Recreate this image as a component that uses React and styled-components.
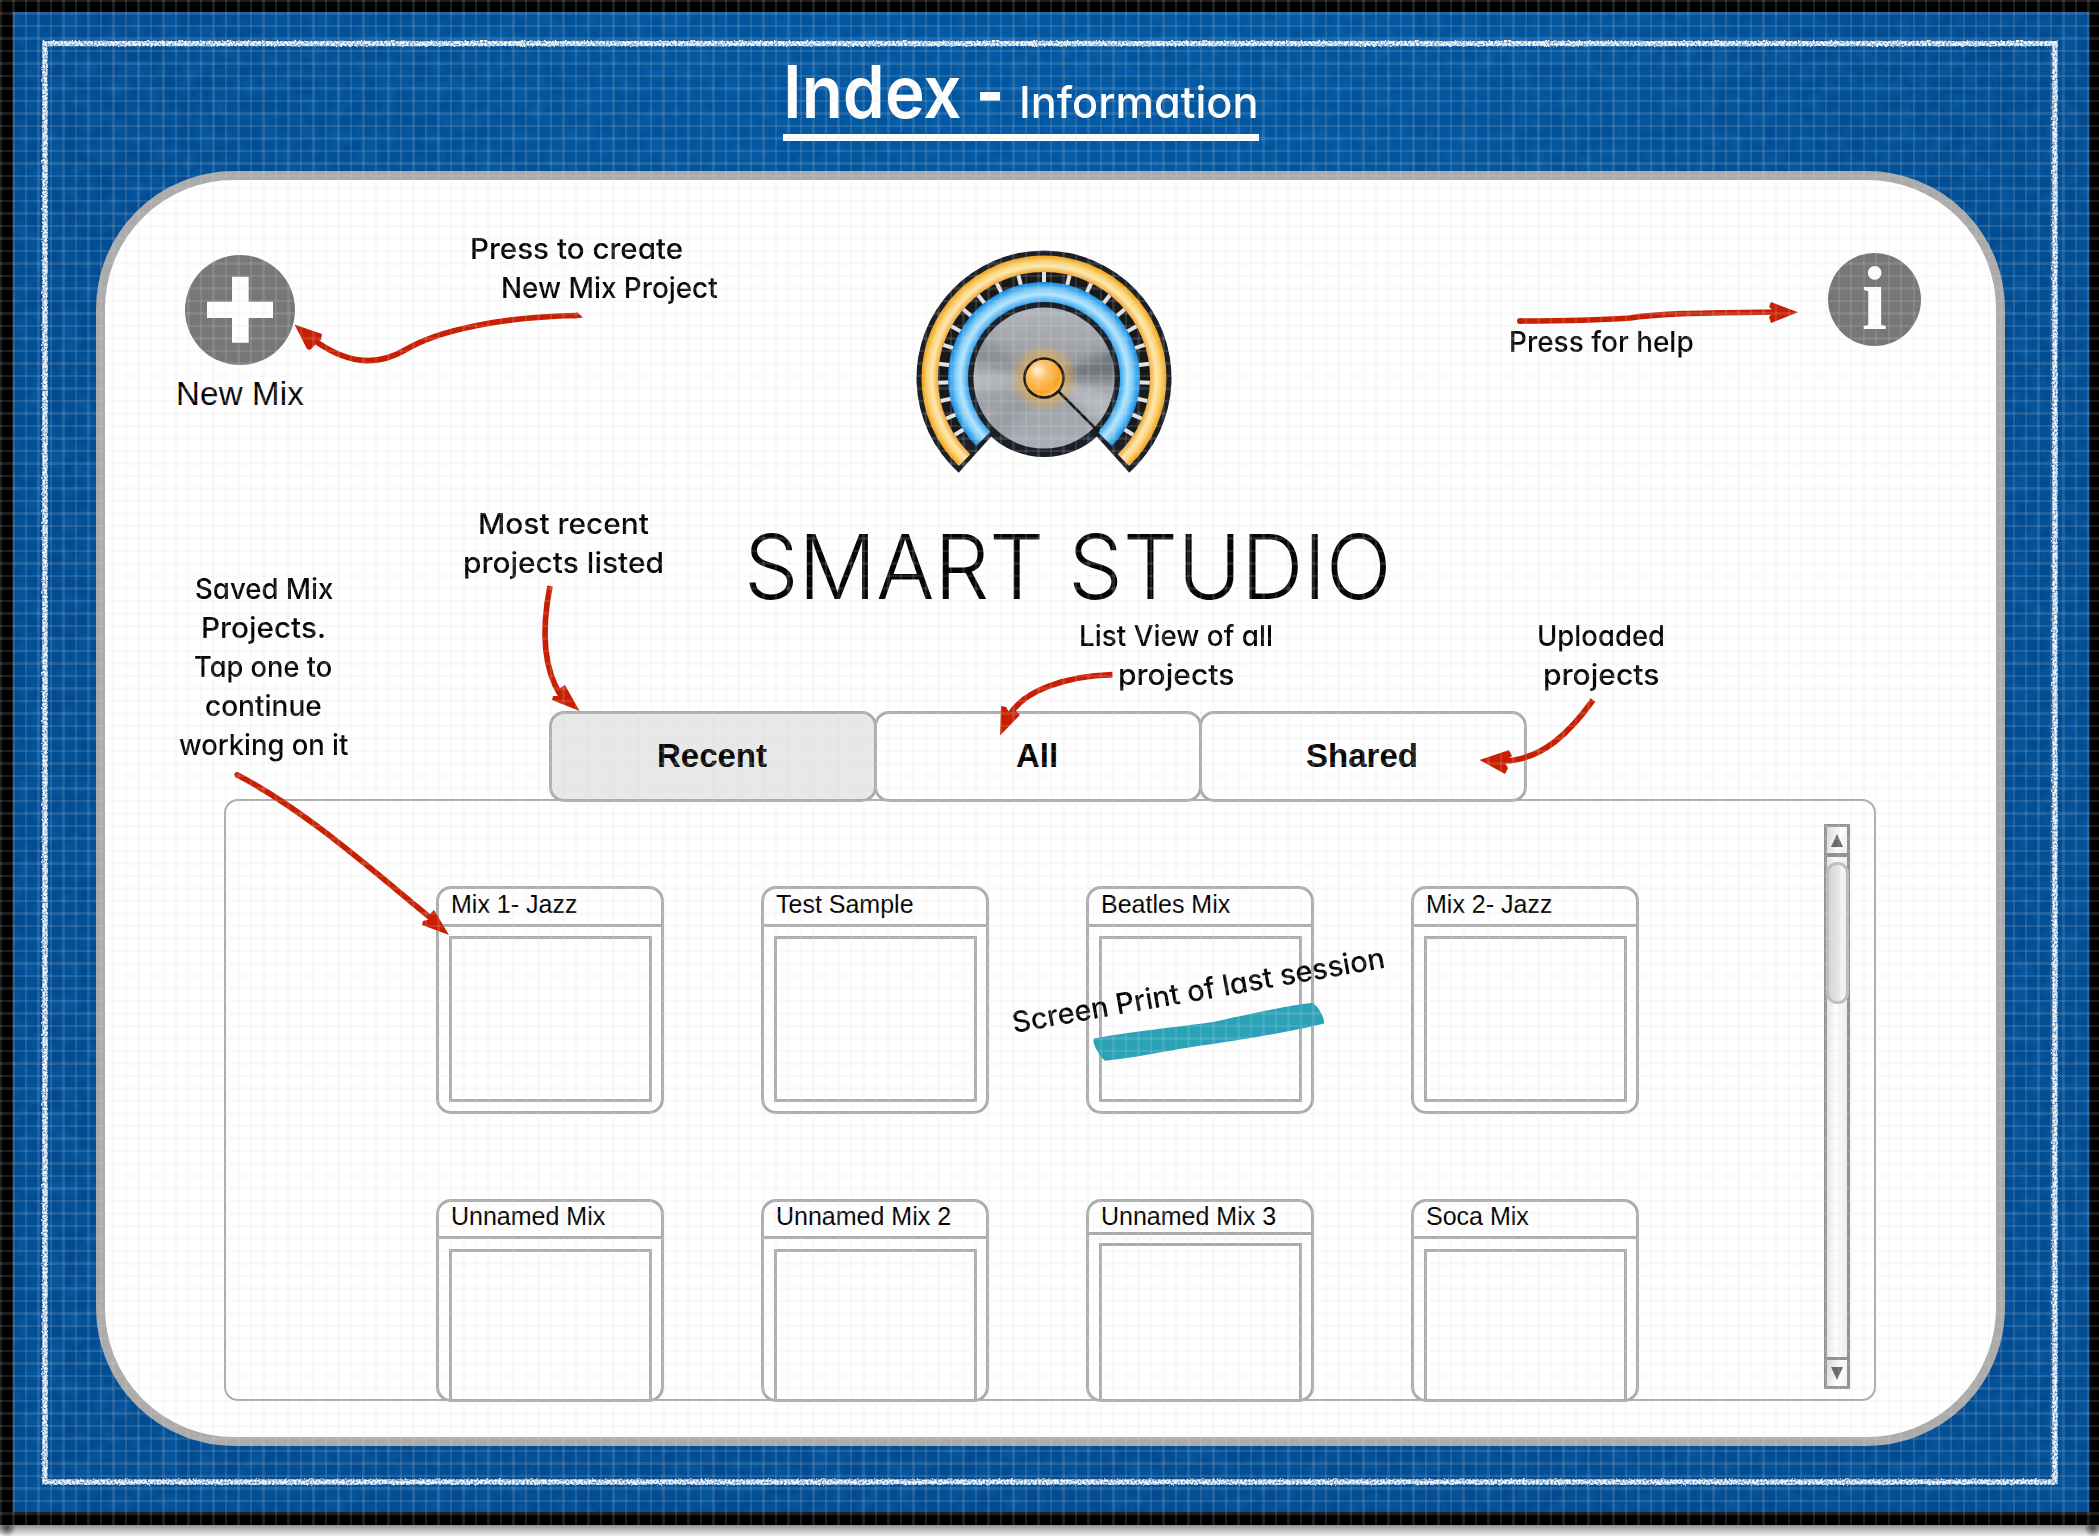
import React, { useLayoutEffect, useRef, useState } from "react";
import styled, { createGlobalStyle } from "styled-components";

const LINE = "#ababab";
const SANS = `"Liberation Sans", Arial, sans-serif`;
const HAND = `Inter, "Open Sans", sans-serif`;

const GlobalStyle = createGlobalStyle`
  html, body { margin: 0; padding: 0; background: #f4f4f4; }
  * { box-sizing: border-box; }
`;

const Page = styled.div`
  position: relative;
  width: 2099px;
  height: 1536px;
  overflow: hidden;
  background: #f4f4f4;
  font-family: ${SANS};
  color: #050505;
`;

const Frame = styled.div`
  width: 2099px;
  height: 1525px;
  padding: 12px 10px 13px 13px;
  background: #000;
`;

const FrameShadow = styled.div`
  height: 11px;
  background:
    radial-gradient(circle at 7px 3px, rgba(40, 40, 40, 0.75), transparent 9px),
    radial-gradient(circle at 2093px 3px, rgba(40, 40, 40, 0.75), transparent 9px),
    linear-gradient(#939393, #f0f0f0);
`;

const Board = styled.div`
  position: relative;
  width: 2076px;
  height: 1500px;
  background: radial-gradient(ellipse 1000px 500px at 50% 8%, #0057a2, #004f96 70%, #004b91);
`;

const Layer = styled.svg`
  position: absolute;
  left: 0;
  top: 0;
  pointer-events: none;
`;

const Header = styled.header`
  position: relative;
  height: 159px;
  padding-left: 770px;
`;

const Heading = styled.div`
  display: flex;
  align-items: baseline;
  width: 476px;
  height: 129px;
  padding: 35px 0 0;
  border-bottom: 7px solid #fff;
  color: #fff;
  font-family: ${HAND};
  font-feature-settings: "cv11";
`;

const FitBox = styled.span`
  display: inline-block;
  flex: none;
  width: ${(p) => p.$width}px;
  margin-left: ${(p) => p.$indent || 0}px;
  font-size: ${(p) => (p.$size ? p.$size + "px" : "inherit")};
  font-weight: ${(p) => p.$weight || "inherit"};
  white-space: nowrap;
`;

const FitInner = styled.span`
  display: inline-block;
  transform-origin: 0 50%;
`;

function Fit({ width, indent, size, weight, children }) {
  const ref = useRef(null);
  const [scale, setScale] = useState(1);
  useLayoutEffect(() => {
    setScale(width / ref.current.offsetWidth);
  }, [width]);
  return (
    <FitBox $width={width} $indent={indent} $size={size} $weight={weight}>
      <FitInner ref={ref} style={{ transform: `scaleX(${scale})` }}>
        {children}
      </FitInner>
    </FitBox>
  );
}

const Panel = styled.main`
  position: relative;
  display: flex;
  flex-direction: column;
  width: 1909px;
  height: 1275px;
  margin-left: 83px;
  border: 9px solid ${LINE};
  border-radius: 138px;
  background: #fff;
`;

const TopBar = styled.div`
  display: grid;
  grid-template-columns: 138px 1fr 93px;
  height: 328px;
  padding: 68px 75px 0 66px;
`;

const NewMix = styled.div`
  display: flex;
  flex-direction: column;
  align-items: center;
  gap: 10px;
  margin-top: 7px;
  font-size: 33px;
  line-height: 37px;
  letter-spacing: 0.2px;
`;

const Logo = styled.svg`
  justify-self: center;
  margin-right: 49px;
`;

const Info = styled.div`
  display: flex;
  justify-content: center;
  width: 93px;
  height: 93px;
  margin: 5px 0 0;
  border-radius: 50%;
  background: #777;
  color: #fff;
  font: bold 91px/92px "Liberation Serif", "Times New Roman", serif;
`;

const AppTitle = styled.h1`
  margin: 5px 0 0 639px;
  font-family: Inter, ${SANS};
  font-size: 89px;
  font-weight: 300;
  line-height: 108px;
`;

const Tabs = styled.div`
  display: flex;
  margin: 90px 0 0 444px;
`;

const Tab = styled.div`
  display: flex;
  align-items: center;
  justify-content: center;
  width: 328px;
  height: 91px;
  margin-right: -3px;
  padding: 0 2px 2px 0;
  border: 3px solid ${LINE};
  border-radius: 15px;
  background: ${(p) => (p.$active ? "#e8e8e8" : "transparent")};
  font-size: 33px;
  font-weight: bold;
`;

const List = styled.div`
  display: flex;
  align-items: flex-start;
  width: 1652px;
  height: 602px;
  margin: -3px 0 0 119px;
  border: 2px solid ${LINE};
  border-radius: 14px;
`;

const Cards = styled.div`
  display: grid;
  grid-template-columns: repeat(4, 228px);
  grid-template-rows: 228px 203px;
  gap: 85px 97px;
  padding: 85px 0 0 210px;
`;

const Card = styled.div`
  display: flex;
  flex-direction: column;
  border: 3px solid ${LINE};
  border-radius: 15px;
`;

const CardTitle = styled.div`
  flex: none;
  height: ${(p) => p.$height}px;
  padding: ${(p) => (p.$cut ? 0 : 1)}px 0 0 12px;
  border-bottom: 3px solid ${LINE};
  font-size: 25px;
  line-height: 28px;
`;

const Preview = styled.div`
  flex: 1;
  margin: ${(p) => p.$gap}px 9px ${(p) => (p.$cut ? -3 : 9)}px 10px;
  border: 3px solid ${LINE};
`;

const Scrollbar = styled.div`
  display: flex;
  flex-direction: column;
  width: 26px;
  height: 565px;
  margin: 23px 24px 0 auto;
  border: 3px solid #929292;
  background: linear-gradient(90deg, #e6e6e6, #fdfdfd 45%, #f6f6f6 70%, #ededed);
`;

const ScrollButton = styled.div`
  display: flex;
  align-items: center;
  justify-content: center;
  flex: none;
  height: ${(p) => (p.$down ? 29 : 30)}px;
  border: 0 solid #929292;
  border-width: ${(p) => (p.$down ? "3px 0 0" : "0 0 4px")};
  background: linear-gradient(100deg, #d9d9d9, #fff 60%, #f0f0f0);
`;

const Track = styled.div`
  flex: 1;
  padding-top: 5px;
`;

const Thumb = styled.div`
  width: 23px;
  height: 142px;
  margin-left: -1px;
  border: 3px solid #bcbcbc;
  border-radius: 11px;
  background: linear-gradient(90deg, #d6d6d6, #e2e2e2 45%, #f6f6f6 80%, #ececec);
`;

const Note = styled.div`
  position: absolute;
  left: ${(p) => p.$x}px;
  top: ${(p) => p.$baseline - 30}px;
  display: flex;
  flex-direction: column;
  transform: rotate(${(p) => p.$turn || 0}deg);
  transform-origin: 0 30px;
  font-family: ${HAND};
  font-feature-settings: "cv11";
  font-size: 29px;
  font-weight: 500;
  line-height: 39px;
`;

const GridOverlay = styled.div`
  position: absolute;
  inset: 0 0 11px 0;
  pointer-events: none;
  background:
    repeating-linear-gradient(90deg, rgba(216, 216, 216, 0.14) 0 2.3px, transparent 2.3px 12.5px),
    repeating-linear-gradient(180deg, rgba(216, 216, 216, 0.14) 0 2.3px, transparent 2.3px 12.5px);
`;

const NOTES = [
  { x: 470, baseline: 259, lines: [["Press to create", 213, 0], ["New Mix Project", 217, 31]] },
  { x: 1509, baseline: 352, lines: [["Press for help", 185, 0]] },
  { x: 463, baseline: 534, lines: [["Most recent", 171, 15], ["projects listed", 201, 0]] },
  {
    x: 179,
    baseline: 599,
    lines: [
      ["Saved Mix", 138, 16],
      ["Projects.", 125, 22],
      ["Tap one to", 138, 15],
      ["continue", 117, 26],
      ["working on it", 169, 0],
    ],
  },
  { x: 1079, baseline: 646, lines: [["List View of all", 194, 0], ["projects", 116, 39]] },
  { x: 1537, baseline: 646, lines: [["Uploaded", 128, 0], ["projects", 116, 6]] },
  { x: 1014, baseline: 1033, turn: -10, lines: [["Screen Print of last session", 378, 0]] },
];

const ARROWS = [
  { d: "M577 315.5C505 317 440 329 405 350C376 367 346 364 311 338", head: "294.5,324.500 322,334 321,340 315,341 315,345 310,350 307,349" },
  { d: "M1520 321C1560 321 1600 320 1630 318C1665 313 1700 313 1778 312", head: "1798,312.3 1771,302 1769,307 1774,311 1769,317 1771,323" },
  { d: "M550 586C543 622 541 665 561 696", head: "579.6,711 565,685 560,688 561,696 553,696 552,700" },
  { d: "M236.500 774.500C307 811 374 872 438 924", head: "449,935 434,910 430,914 431,919 423,921 422,925" },
  { d: "M1112.500 674.700C1065 676 1023 691 1009 716", head: "1000,735.500 1001,706 1006,707 1009,712 1016,711 1020,715" },
  { d: "M1593 700C1571 731 1542 761 1502 761", head: "1479.500,760 1509,750 1512,756 1504,761 1508,768 1505,774" },
];

const CARDS = [
  "Mix 1- Jazz",
  "Test Sample",
  "Beatles Mix",
  "Mix 2- Jazz",
  "Unnamed Mix",
  "Unnamed Mix 2",
  "Unnamed Mix 3",
  "Soca Mix",
];

const TICKS = [0, 14, 26.5, 38.5, 49.6, 60.8, 71.8, 82.3, 92.6, 102.5, 112.5, 122.5];

function polar(r, deg) {
  const a = (deg * Math.PI) / 180;
  return `${(r * Math.sin(a)).toFixed(2)} ${(-r * Math.cos(a)).toFixed(2)}`;
}

function ring(r0, r1, end) {
  return `M${polar(r1, -end)}A${r1} ${r1} 0 1 1 ${polar(r1, end)}L${polar(r0, end)}A${r0} ${r0} 0 1 0 ${polar(r0, -end)}Z`;
}

function Gauge() {
  return (
    <Logo width="260" height="260" viewBox="-130 -130 260 260">
      <defs>
        <radialGradient id="amber" gradientUnits="userSpaceOnUse" cx="0" cy="0" r="123">
          <stop offset="0.86" stopColor="#f0a52c" />
          <stop offset="0.91" stopColor="#ffe9b0" />
          <stop offset="0.95" stopColor="#fed371" />
          <stop offset="1" stopColor="#ee9a08" />
        </radialGradient>
        <radialGradient id="sky" gradientUnits="userSpaceOnUse" cx="0" cy="0" r="96">
          <stop offset="0.79" stopColor="#2ea2ee" />
          <stop offset="0.87" stopColor="#b4e6ff" />
          <stop offset="0.92" stopColor="#84d0fb" />
          <stop offset="1" stopColor="#0f87df" />
        </radialGradient>
        <linearGradient id="steel" x1="0" y1="0" x2="0" y2="1">
          <stop offset="0" stopColor="#b0b4b8" />
          <stop offset="0.35" stopColor="#9da0a4" />
          <stop offset="0.6" stopColor="#9ba0a6" />
          <stop offset="1" stopColor="#a9afb6" />
        </linearGradient>
        <radialGradient id="glow">
          <stop offset="0.4" stopColor="#ffae2e" />
          <stop offset="1" stopColor="#ffae2e" stopOpacity="0" />
        </radialGradient>
        <radialGradient id="hub" cx="0.35" cy="0.32" r="0.75">
          <stop offset="0" stopColor="#fff6e6" />
          <stop offset="0.3" stopColor="#ffc468" />
          <stop offset="0.75" stopColor="#fba31f" />
          <stop offset="1" stopColor="#ffc873" />
        </radialGradient>
        <filter id="soft" x="-50%" y="-50%" width="200%" height="200%" colorInterpolationFilters="sRGB">
          <feGaussianBlur stdDeviation="6" />
        </filter>
        <clipPath id="disc">
          <circle r="70.500" />
        </clipPath>
      </defs>
      <path d={ring(70, 127.5, 138)} fill="#1b1f28" />
      <circle r="79" fill="#1b1f28" />
      <path d={ring(95, 107, 128)} fill="#16181a" />
      {TICKS.flatMap((t) => (t ? [t, -t] : [t])).map((t) => (
        <rect key={t} x="-2" y="-106" width="4" height="13" fill="#e2e2e2" transform={`rotate(${t})`} />
      ))}
      <path d={ring(106, 122.5, 136)} fill="url(#amber)" />
      <path d={ring(76, 96, 135)} fill="url(#sky)" />
      <circle r="70.500" fill="url(#steel)" />
      <g clipPath="url(#disc)">
        <g filter="url(#soft)">
          <path d="M0 0L75 -30L80 2Z" fill="#5d6166" opacity="0.7" />
          <path d="M0 0L-66 -42L-76 -18Z" fill="#74787d" opacity="0.45" />
          <path d="M0 0L-80 -8L-78 16Z" fill="#c3c7cc" opacity="0.7" />
          <path d="M0 0L75 16L60 44Z" fill="#c6cad0" opacity="0.6" />
          <path d="M0 0L-60 44L-40 62Z" fill="#888c92" opacity="0.4" />
        </g>
      </g>
      <circle r="35" fill="url(#glow)" opacity="0.75" />
      <path d="M14 13L55 54" stroke="#15171a" strokeWidth="2.500" />
      <circle r="19.500" fill="url(#hub)" stroke="#1a1a1a" strokeWidth="2.600" />
    </Logo>
  );
}

function BoardTexture() {
  return (
    <Layer width="2076" height="1500">
      <defs>
        <filter id="paper" x="0" y="0" width="100%" height="100%" colorInterpolationFilters="sRGB">
          <feTurbulence type="fractalNoise" baseFrequency="0.06" numOctaves="5" seed="4" />
          <feColorMatrix values="0 0 0 0 0.1  0 0 0 0 0.45  0 0 0 0 0.75  0.6 0 0 0 -0.2" />
        </filter>
        <filter id="chalk" filterUnits="userSpaceOnUse" x="0" y="0" width="2076" height="1500" colorInterpolationFilters="sRGB">
          <feTurbulence type="fractalNoise" baseFrequency="0.5" numOctaves="2" seed="9" result="n" />
          <feDisplacementMap in="SourceGraphic" in2="n" scale="3" xChannelSelector="R" yChannelSelector="G" result="rough" />
          <feColorMatrix in="n" values="0 0 0 0 1  0 0 0 0 1  0 0 0 0 1  3 0 0 0 -0.8" result="grain" />
          <feComposite in="rough" in2="grain" operator="in" />
        </filter>
      </defs>
      <rect width="2076" height="1500" filter="url(#paper)" />
      <rect x="32" y="31.500" width="2010" height="1438.500" fill="none" stroke="#fff" strokeOpacity="0.35" strokeWidth="4.500" />
      <rect x="32" y="31.500" width="2010" height="1438.500" fill="none" stroke="#fff" strokeWidth="5.500" filter="url(#chalk)" />
    </Layer>
  );
}

export default function App() {
  return (
    <Page>
      <GlobalStyle />
      <Frame>
        <Board>
          <BoardTexture />
          <Header>
            <Heading>
              <Fit width={179} size={73} weight={600}>Index</Fit>
              <Fit width={28} size={73} weight={700} indent={14}>-</Fit>
              <Fit width={240} size={44} weight={500} indent={15}>Information</Fit>
            </Heading>
          </Header>
          <Panel>
            <TopBar>
              <NewMix>
                <svg width="110" height="110">
                  <circle cx="55" cy="55" r="55" fill="#777" />
                  <path d="M47 21.700h16.700v25h24.300v16.300H63.700v24.700H47V63H22V46.700h25z" fill="#fff" />
                </svg>
                New Mix
              </NewMix>
              <Gauge />
              <Info>i</Info>
            </TopBar>
            <AppTitle>
              <Fit width={648}>SMART STUDIO</Fit>
            </AppTitle>
            <Tabs>
              <Tab $active>Recent</Tab>
              <Tab>All</Tab>
              <Tab>Shared</Tab>
            </Tabs>
            <List>
              <Cards>
                {CARDS.map((name, i) => {
                  const cut = i > 3;
                  const short = i === 6;
                  return (
                    <Card key={name}>
                      <CardTitle $cut={cut} $height={short ? 33 : cut ? 37 : 38}>{name}</CardTitle>
                      <Preview $cut={cut} $gap={short ? 8 : cut ? 10 : 9} />
                    </Card>
                  );
                })}
              </Cards>
              <Scrollbar>
                <ScrollButton>
                  <svg width="12" height="13"><path d="M6 0L12 13H0z" fill="#6a6a6a" /></svg>
                </ScrollButton>
                <Track>
                  <Thumb />
                </Track>
                <ScrollButton $down>
                  <svg width="12" height="13"><path d="M0 0H12L6 13z" fill="#6a6a6a" /></svg>
                </ScrollButton>
              </Scrollbar>
            </List>
          </Panel>
        </Board>
      </Frame>
      <FrameShadow />
      <Layer width="2099" height="1536">
        <path
          d="M1094 1038.500C1120 1033 1185 1026 1213 1022C1240 1016 1290 1005 1311 1003C1317 1003 1325 1018 1324 1023.500C1290 1032 1240 1040 1213 1044C1185 1047 1130 1059 1105 1060.700C1101 1058 1091 1043 1094 1038.500Z"
          fill="#2aa3b9"
        />
        {ARROWS.map((a) => (
          <g key={a.d} fill="#c81f02">
            <path d={a.d} fill="none" stroke="#c81f02" strokeWidth="5.700" />
            <polygon points={a.head} />
          </g>
        ))}
        <circle cx="1520" cy="321" r="3" fill="#c81f02" />
        <circle cx="237" cy="774.700" r="2.600" fill="#c81f02" />
        <path d="M574 316L577 312L583 317.500L574 318.500z" fill="#c81f02" />
      </Layer>
      {NOTES.map((n) => (
        <Note key={n.x} $x={n.x} $baseline={n.baseline} $turn={n.turn}>
          {n.lines.map(([text, width, indent]) => (
            <Fit key={text} width={width} indent={indent}>{text}</Fit>
          ))}
        </Note>
      ))}
      <GridOverlay />
    </Page>
  );
}
